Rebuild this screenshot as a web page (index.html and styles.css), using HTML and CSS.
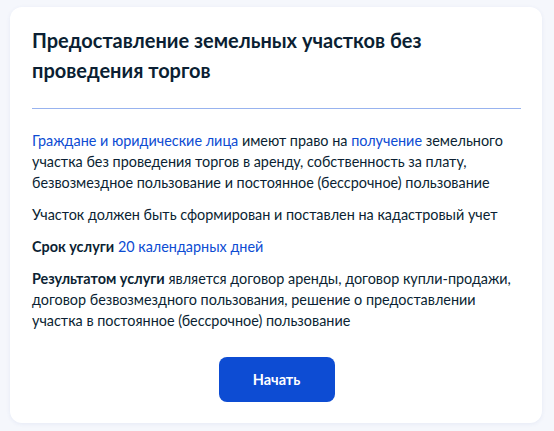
FILE: index.html
```html
<!DOCTYPE html>
<html lang="ru">
<head>
<meta charset="utf-8">
<link rel="stylesheet" href="styles.css">
</head>
<body>
<div class="card">
  <h1 class="title">Предоставление земельных участков без проведения торгов</h1>
  <hr class="divider">
  <p class="para"><a class="link" href="#">Граждане и юридические лица</a> имеют право на <a class="link" href="#">получение</a> земельного участка без проведения торгов в аренду, собственность за плату, безвозмездное пользование и постоянное (бессрочное) пользование</p>
  <p class="para">Участок должен быть сформирован и поставлен на кадастровый учет</p>
  <p class="para"><b class="strong">Срок услуги</b> <span class="accent">20 календарных дней</span></p>
  <p class="para"><b class="strong">Результатом услуги</b> является договор аренды, договор купли-продажи, договор безвозмездного пользования, решение о предоставлении участка в постоянное (бессрочное) пользование</p>
  <div class="actions"><button class="btn">Начать</button></div>
</div>
</body>
</html>
```
FILE: styles.css
```css
html, body {
  margin: 0;
  padding: 0;
}
body {
  background: #f5f7fc;
  font-family: Lato, "Noto Sans", sans-serif;
  color: #0b1f33;
  width: 554px;
  height: 431px;
  overflow: hidden;
}
.card {
  margin: 7px 12px 0 10px;
  height: 416px;
  box-sizing: border-box;
  background: #ffffff;
  border-radius: 12px;
  box-shadow: 0 1px 4px rgba(45, 80, 160, 0.08);
  padding: 18px 21px 0 22px;
}
.title {
  margin: 0;
  font-size: 20px;
  line-height: 30px;
  font-weight: 700;
  color: #0b1f33;
}
.divider {
  margin: 23px 0 21px 0;
  border: 0;
  height: 1px;
  background: #98b3ef;
}
.para {
  margin: 0 0 11px 0;
  font-size: 14.4px;
  line-height: 21px;
}
.link, .accent {
  color: #0d4cd3;
  text-decoration: none;
}
.strong {
  font-weight: 700;
}
.actions {
  display: flex;
  justify-content: center;
  padding-top: 15px;
}
.btn {
  width: 116px;
  height: 45px;
  border: 0;
  border-radius: 8px;
  background: #0d4cd3;
  color: #ffffff;
  font-family: Lato, "Noto Sans", sans-serif;
  font-size: 14.5px;
  font-weight: 700;
}
```
